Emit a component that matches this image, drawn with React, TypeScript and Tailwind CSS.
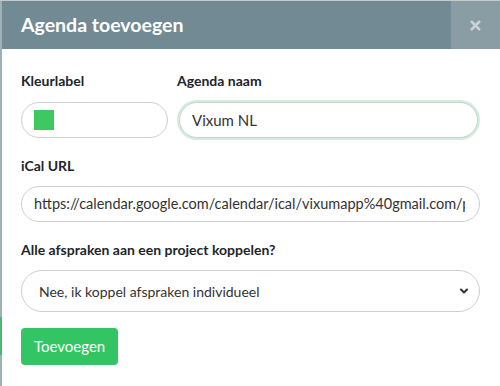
import { ChevronDown, X } from "lucide-react";

const font = { fontFamily: "Lato, 'Open Sans', sans-serif" };

export default function App() {
  return (
    <div
      className="flex h-[386px] w-[500px] flex-col overflow-hidden bg-white text-[#212529]"
      style={font}
    >
      {/* backdrop sliver on top */}
      <div className="h-px w-full bg-[#c3cbcf]" />
      <div className="flex min-w-0 flex-1">
        {/* backdrop sliver on the left */}
        <div className="flex w-[2px] shrink-0 flex-col bg-[#9fb0b6]">
          <div className="mt-[316px] h-[38px] bg-[#4cb874]" />
        </div>

        <div className="flex min-w-0 flex-1 flex-col">
          {/* Header */}
          <div className="flex h-[48px] items-stretch bg-[#718a93]">
            <h1 className="flex flex-1 items-center pl-[19px] text-[19.5px] font-bold text-white">
              Agenda toevoegen
            </h1>
            <button className="flex w-[49px] shrink-0 items-center justify-center bg-[#8a9da4] text-[#c9d3d7]">
              <X className="h-[15px] w-[15px]" strokeWidth={4} />
            </button>
          </div>

          {/* Body */}
          <div className="flex min-w-0 flex-col pl-[19px] pr-[20px] pt-[24px]">
            <div className="flex gap-[9px]">
              <div className="flex w-[147px] shrink-0 flex-col">
                <label className="text-[14px] font-bold leading-[16px]">Kleurlabel</label>
                <div className="mt-[13px] flex h-[36px] items-center rounded-full border border-[#cfcfcf] px-[12px]">
                  <div className="h-[20px] w-[20px] bg-[#3dc862]" />
                </div>
              </div>
              <div className="flex min-w-0 flex-1 flex-col">
                <label className="text-[14px] font-bold leading-[16px]">Agenda naam</label>
                <div className="mt-[11px] rounded-full bg-[#cfeedc] p-[2px]">
                  <div className="flex h-[36px] items-center rounded-full border border-[#cfcfcf] bg-white px-[12px] text-[15px] text-[#333]">
                    Vixum NL
                  </div>
                </div>
              </div>
            </div>

            <label className="mt-[18px] text-[14px] font-bold leading-[16px]">iCal URL</label>
            <div className="mt-[12px] flex h-[36px] min-w-0 items-center overflow-hidden rounded-full border border-[#cfcfcf] pl-[12px] pr-[14px] text-[14.5px] text-[#333]">
              <span className="block min-w-0 overflow-hidden whitespace-nowrap">
                https://calendar.google.com/calendar/ical/vixumapp%40gmail.com/private-abc123/basic.ics
              </span>
            </div>

            <label className="mt-[20px] text-[14px] font-bold leading-[16px]">
              Alle afspraken aan een project koppelen?
            </label>
            <div className="mt-[12px] flex h-[42px] items-center justify-between rounded-full border border-[#cfcfcf] pl-[17px] pr-[9px] text-[14px] text-[#333]">
              <span>Nee, ik koppel afspraken individueel</span>
              <ChevronDown className="h-[12px] w-[12px] text-[#333]" strokeWidth={4} />
            </div>

            <div className="mt-[16px]">
              <button className="h-[37px] rounded-[4px] bg-[#33c563] px-[13px] text-[15px] text-white">
                Toevoegen
              </button>
            </div>
          </div>
        </div>
      </div>
    </div>
  );
}
